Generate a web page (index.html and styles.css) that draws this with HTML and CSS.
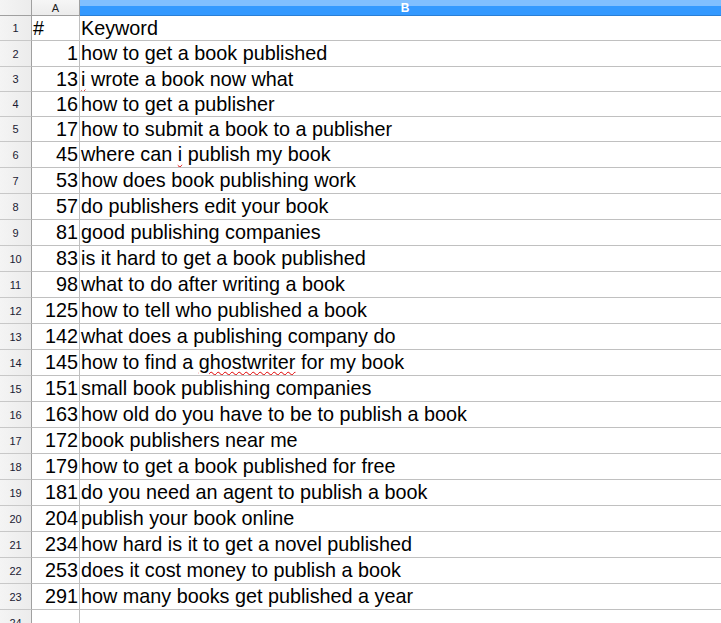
FILE: index.html
```html
<!DOCTYPE html>
<html lang="en">
<head>
  <meta charset="UTF-8" />
  <title>Keywords</title>
  <link rel="stylesheet" href="styles.css">
</head>
<body>
  <div class="sheet">
    <div class="row head">
      <div class="rh corner"></div>
      <div class="ch">A</div>
      <div class="ch sel">B</div>
    </div>

    <div class="row first"><div class="rh">1</div><div class="cell">#</div><div class="cell">Keyword</div></div>
    <div class="row"><div class="rh">2</div><div class="cell num">1</div><div class="cell">how to get a book published</div></div>
    <div class="row short"><div class="rh">3</div><div class="cell num">13</div><div class="cell"><span class="typo">i</span> wrote a book now what</div></div>
    <div class="row short"><div class="rh">4</div><div class="cell num">16</div><div class="cell">how to get a publisher</div></div>
    <div class="row short"><div class="rh">5</div><div class="cell num">17</div><div class="cell">how to submit a book to a publisher</div></div>
    <div class="row"><div class="rh">6</div><div class="cell num">45</div><div class="cell">where can <span class="typo">i</span> publish my book</div></div>
    <div class="row"><div class="rh">7</div><div class="cell num">53</div><div class="cell">how does book publishing work</div></div>
    <div class="row"><div class="rh">8</div><div class="cell num">57</div><div class="cell">do publishers edit your book</div></div>
    <div class="row"><div class="rh">9</div><div class="cell num">81</div><div class="cell">good publishing companies</div></div>
    <div class="row"><div class="rh">10</div><div class="cell num">83</div><div class="cell">is it hard to get a book published</div></div>
    <div class="row"><div class="rh">11</div><div class="cell num">98</div><div class="cell">what to do after writing a book</div></div>
    <div class="row"><div class="rh">12</div><div class="cell num">125</div><div class="cell">how to tell who published a book</div></div>
    <div class="row"><div class="rh">13</div><div class="cell num">142</div><div class="cell">what does a publishing company do</div></div>
    <div class="row"><div class="rh">14</div><div class="cell num">145</div><div class="cell">how to find a <span class="typo">ghostwriter</span> for my book</div></div>
    <div class="row"><div class="rh">15</div><div class="cell num">151</div><div class="cell">small book publishing companies</div></div>
    <div class="row"><div class="rh">16</div><div class="cell num">163</div><div class="cell">how old do you have to be to publish a book</div></div>
    <div class="row"><div class="rh">17</div><div class="cell num">172</div><div class="cell">book publishers near me</div></div>
    <div class="row"><div class="rh">18</div><div class="cell num">179</div><div class="cell">how to get a book published for free</div></div>
    <div class="row"><div class="rh">19</div><div class="cell num">181</div><div class="cell">do you need an agent to publish a book</div></div>
    <div class="row"><div class="rh">20</div><div class="cell num">204</div><div class="cell">publish your book online</div></div>
    <div class="row"><div class="rh">21</div><div class="cell num">234</div><div class="cell">how hard is it to get a novel published</div></div>
    <div class="row"><div class="rh">22</div><div class="cell num">253</div><div class="cell">does it cost money to publish a book</div></div>
    <div class="row"><div class="rh">23</div><div class="cell num">291</div><div class="cell">how many books get published a year</div></div>
    <div class="row"><div class="rh">24</div><div class="cell num"></div><div class="cell"></div></div>
  </div>
</body>
</html>
```

FILE: styles.css
```css
body {
  margin: 0;
  background: #fff;
  font-family: 'Liberation Sans', Arial, sans-serif;
  overflow: hidden;
}
.sheet {
  width: 721px;
}
.row {
  display: grid;
  grid-template-columns: 32px 48px 1fr;
  height: 26px;
  box-sizing: border-box;
}
.row.first,
.row.short {
  height: 25px;
}
.row.head {
  height: 16px;
}
.rh {
  background: linear-gradient(to right, #f4f4f4, #ececec);
  border-right: 1px solid #a0a0a0;
  border-bottom: 1px solid #c8c8c8;
  font-size: 11px;
  color: #1a1a33;
  display: flex;
  align-items: center;
  justify-content: center;
  box-sizing: border-box;
}
.head .rh,
.ch {
  border-bottom: 1px solid #a0a0a0;
}
.ch {
  background: linear-gradient(#f6f6f6, #ececec);
  border-right: 1px solid #a0a0a0;
  font-size: 11px;
  color: #222;
  display: flex;
  align-items: center;
  justify-content: center;
  box-sizing: border-box;
}
.ch.sel {
  background: linear-gradient(#80bfff 0, #80bfff 6px, #3399ff 6px, #3399ff 100%);
  border-right: none;
  border-bottom: 1px solid #2a7fd6;
  color: #fff;
  font-weight: bold;
  font-size: 12px;
  padding-left: 9px;
}
.cell {
  border-right: 1px solid #c0c0c0;
  border-bottom: 1px solid #c0c0c0;
  font-size: 19.8px;
  color: #000;
  padding: 1px 1px 0 1px;
  line-height: 23px;
  white-space: nowrap;
  overflow: hidden;
  box-sizing: border-box;
}
.cell.num {
  text-align: right;
}
.cell:last-child {
  border-right: none;
}
.typo {
  text-decoration: underline wavy #e00000;
  text-decoration-thickness: 1px;
  text-underline-offset: 2px;
}
```
